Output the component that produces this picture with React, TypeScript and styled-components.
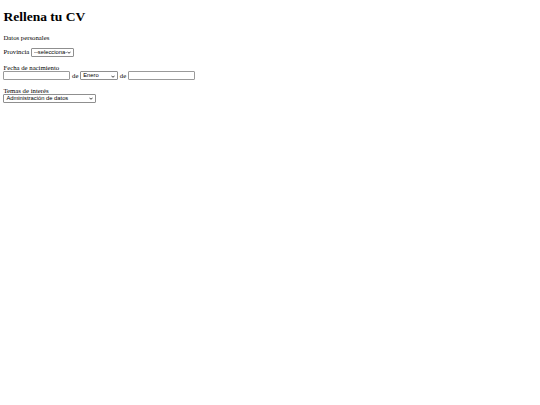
import React from 'react';
import styled, { createGlobalStyle } from 'styled-components';

const GlobalStyle = createGlobalStyle`
  html, body {
    margin: 0;
    background: #ffffff;
  }
  body {
    padding: 3.4px;
  }
`;

const months = [
  'Enero', 'Febrero', 'Marzo', 'Abril', 'Mayo', 'Junio',
  'Julio', 'Agosto', 'Septiembre', 'Octubre', 'Noviembre', 'Diciembre',
];

const temas = [
  'Administración de datos',
  'Administración de sistemas operativos',
  'Programación',
  'Redes',
];

function Chevron() {
  return (
    <Arrow viewBox="0 0 10 6" aria-hidden="true">
      <path d="M1 1l4 4 4-4" fill="none" stroke="#111" strokeWidth="2" />
    </Arrow>
  );
}

function Dropdown({ width, children, defaultValue }: {
  width: number;
  children: React.ReactNode;
  defaultValue?: string;
}) {
  return (
    <SelectWrap>
      <Select $width={width} defaultValue={defaultValue}>
        {children}
      </Select>
      <Chevron />
    </SelectWrap>
  );
}

export default function App() {
  return (
    <>
      <GlobalStyle />
      <Page>
        <Title>Rellena tu CV</Title>
        <Form>
          <Para>Datos personales</Para>
          <Para>
            Provincia <Dropdown width={43} defaultValue="">
              <option value="">--selecciona--</option>
              <option>Madrid</option>
              <option>Sevilla</option>
            </Dropdown>
          </Para>
          <Para>
            Fecha de nacimiento
            <br />
            <Input type="text" /> de <Dropdown width={38} defaultValue="Enero">
              {months.map(m => (
                <option key={m}>{m}</option>
              ))}
            </Dropdown> de <Input type="text" />
          </Para>
          <Para>
            Temas de interés
            <br />
            <Dropdown width={93}>
              {temas.map(t => (
                <option key={t}>{t}</option>
              ))}
            </Dropdown>
          </Para>
        </Form>
      </Page>
    </>
  );
}

const Page = styled.div`
  font-family: 'Liberation Serif', 'Times New Roman', serif;
  font-size: 6.75px;
  color: #000000;
`;

const Title = styled.h1`
  font-size: 13.5px;
  font-weight: bold;
  margin: 5.7px 0 9px;
`;

const Form = styled.form`
  margin: 0;
`;

const Para = styled.p`
  margin: 6.75px 0;
`;

const SelectWrap = styled.span`
  position: relative;
  display: inline-block;
  vertical-align: baseline;
`;

const Select = styled.select<{ $width: number }>`
  appearance: none;
  -webkit-appearance: none;
  box-sizing: border-box;
  width: ${p => p.$width}px;
  height: 9px;
  margin: 0;
  padding: 0 6px 0 2px;
  border: 1px solid #8f8f8f;
  border-radius: 1px;
  background: #ffffff;
  color: #000000;
  font-family: 'Liberation Sans', Arial, sans-serif;
  font-size: 5.8px;
  line-height: 7px;
`;

const Arrow = styled.svg`
  position: absolute;
  right: 3px;
  top: 3.5px;
  width: 4px;
  height: 3px;
  pointer-events: none;
`;

const Input = styled.input`
  box-sizing: border-box;
  width: 67px;
  height: 9px;
  margin: 0;
  padding: 0 1px;
  border: 1px solid #9a9a9a;
  border-radius: 1px;
  font-family: 'Liberation Sans', Arial, sans-serif;
  font-size: 5.6px;
  vertical-align: baseline;
`;
